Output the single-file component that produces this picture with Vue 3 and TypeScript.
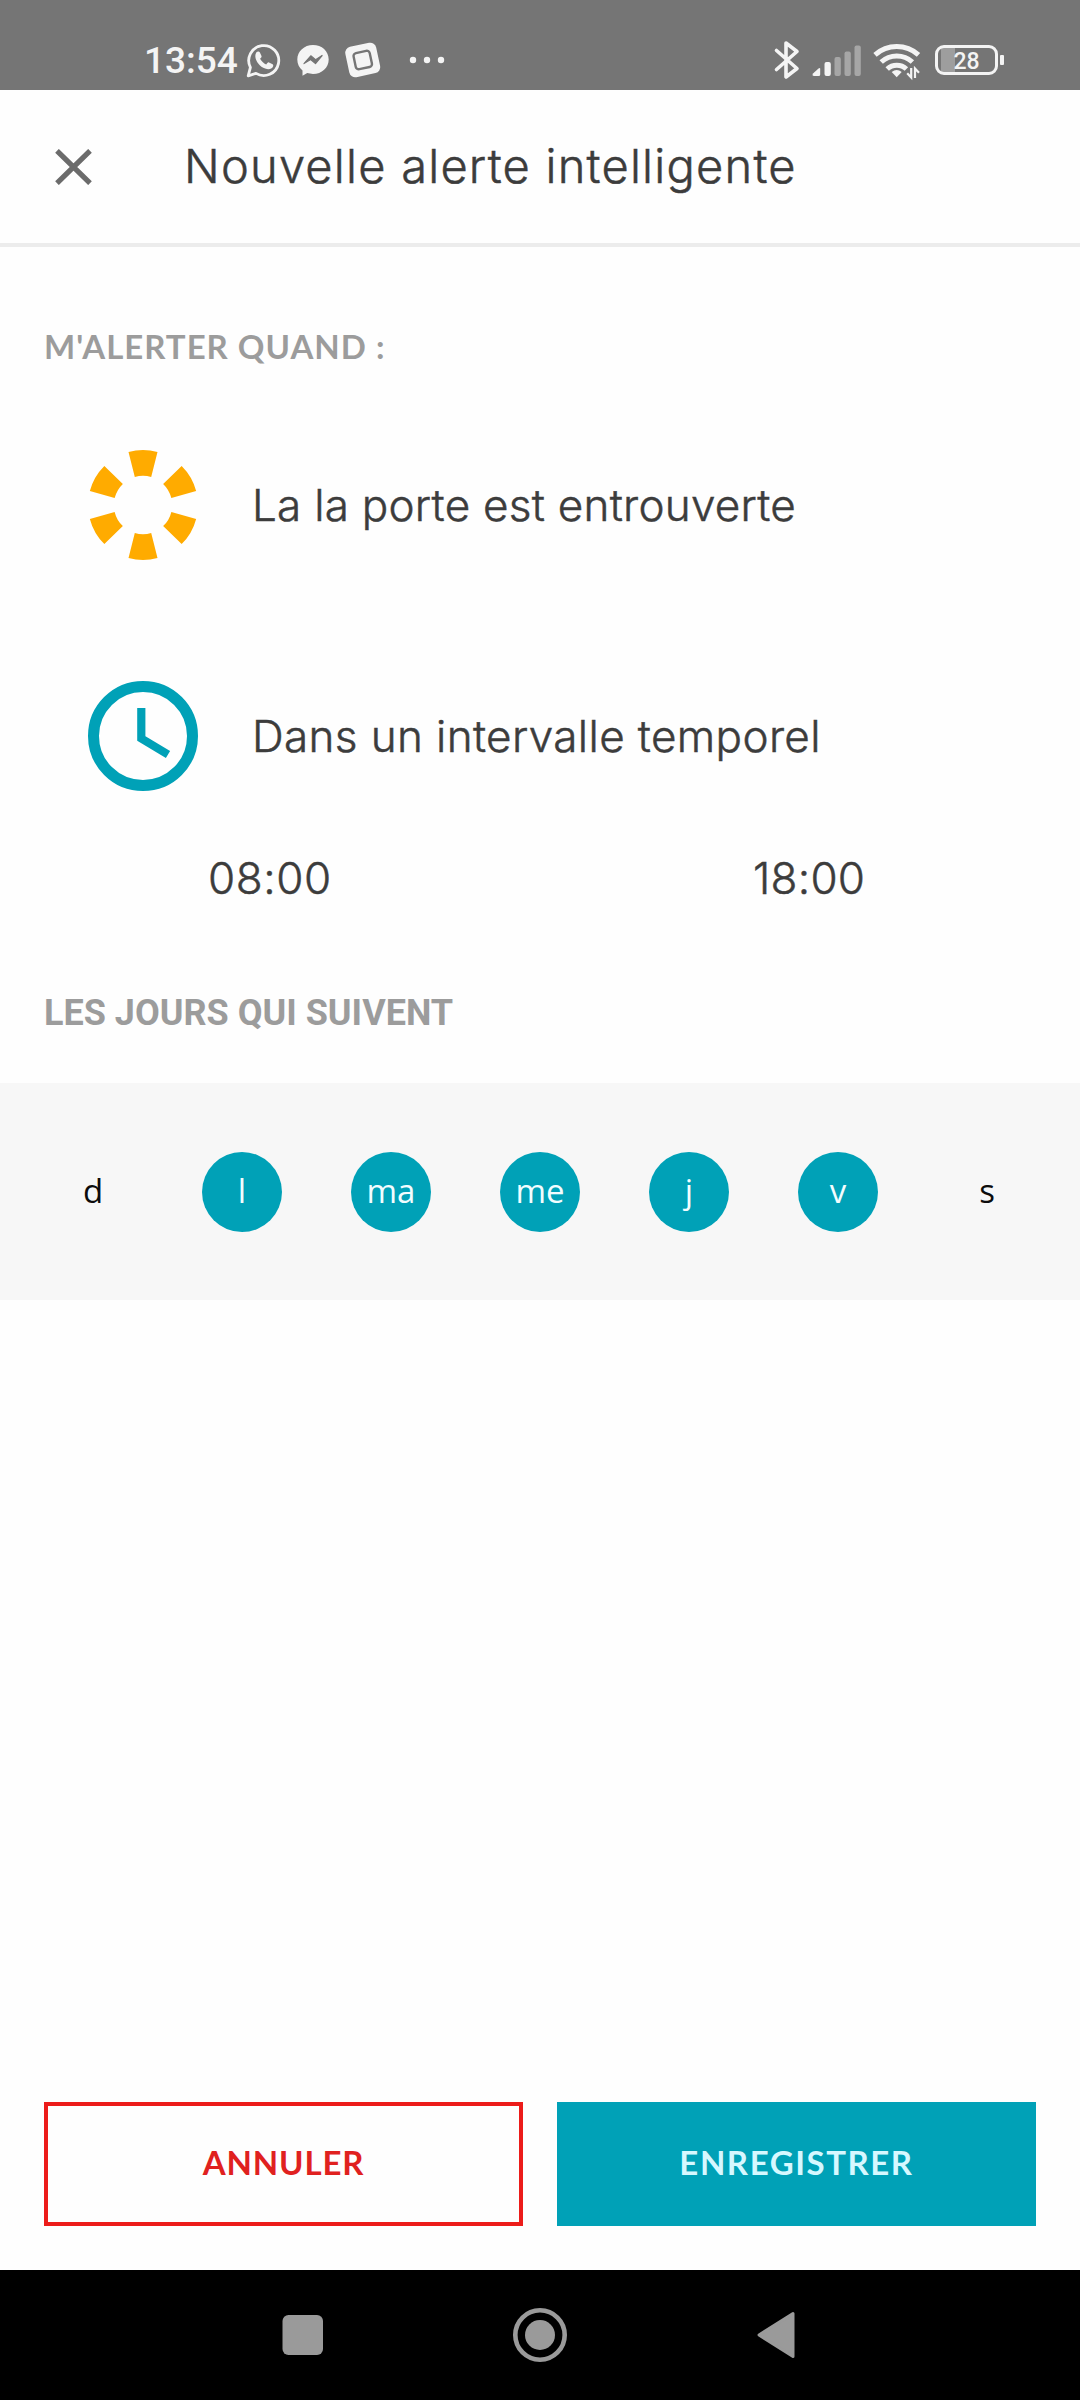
<script setup lang="ts">
import { ref } from 'vue'

interface Day {
  label: string
  active: boolean
}

const days = ref<Day[]>([
  { label: 'd', active: false },
  { label: 'l', active: true },
  { label: 'ma', active: true },
  { label: 'me', active: true },
  { label: 'j', active: true },
  { label: 'v', active: true },
  { label: 's', active: false },
])

const start = ref('08:00')
const end = ref('18:00')
const wedges = [0, 60, 120, 180, 240, 300]

function toggle(day: Day) {
  day.active = !day.active
}
</script>

<template>
  <div class="screen">
    <header class="status">
      <span class="clock">13:54</span>
      <svg class="status-left" width="240" height="50" viewBox="240 35 240 50">
        <!-- WhatsApp -->
        <path d="M248.2 75.8 L250.4 67.4 A15 15 0 1 1 256 73.4 Z" fill="none" stroke="#f4f4f4" stroke-width="2.8" stroke-linejoin="round" />
        <path d="M256.2 52.6c1.2-1.5 3-1.6 3.7-.2l1.6 3.6c.4 1-.8 2-1.4 2.8 1.4 2.6 3.4 4.5 6.1 5.6.9-.8 1.6-2.3 2.8-2l3.6 1.8c1.3.8.5 3-1 4-3.6 2.2-8.5.2-11.600-2.7-3-2.9-6.3-8.6-3.8-12.900z" fill="#f4f4f4" />
        <!-- Messenger -->
        <path d="M313 45c-8.8 0-15.700 6.3-15.700 14.600 0 4.600 2 8.3 5.200 10.900v5.300l4.700-2.700c1.800.5 3.800.8 5.800.8 8.800 0 15.700-6.200 15.700-14.500S321.800 45 313 45z" fill="#f4f4f4" />
        <path d="M304 63.600l6.800-7.800 4.800 4 6.500-4.300-6.600 8-4.900-4z" fill="#757575" stroke="#757575" stroke-width="1.2" stroke-linejoin="round" />
        <!-- Tilted square -->
        <g transform="rotate(-12 362.7 60)">
          <rect x="347" y="44.5" width="31.5" height="31" rx="6" fill="#f4f4f4" />
          <rect x="354.5" y="51.8" width="16.5" height="16.5" rx="3" fill="none" stroke="#757575" stroke-width="2.4" />
        </g>
        <g fill="#f4f4f4">
          <circle cx="413" cy="60" r="3.2" />
          <circle cx="427" cy="60" r="3.2" />
          <circle cx="441" cy="60" r="3.2" />
        </g>
      </svg>
      <svg class="status-right" width="165" height="50" viewBox="770 35 165 50">
        <!-- Bluetooth -->
        <path d="M776.5 50.5 L797 68.5 L786 77 V43 L797 51.5 L776.5 69.5" fill="none" stroke="#f4f4f4" stroke-width="3.6" stroke-linejoin="round" stroke-linecap="round" />
        <!-- Mobile signal -->
        <path d="M813 73.500l5.500-5q1.700-1.300 1.700.5v5.500q0 1.500-1.500 1.500h-4.500q-2.500 0-1.200-2.500z" fill="#f4f4f4" />
        <rect x="824.5" y="62" width="6.3" height="14" rx="2" fill="#f4f4f4" />
        <g fill="#a6a6a6">
          <rect x="834.5" y="57" width="6.3" height="19" rx="2" />
          <rect x="844.5" y="51.5" width="6.3" height="24.5" rx="2" />
          <rect x="854.5" y="45.5" width="6.3" height="30.5" rx="2" />
        </g>
        <!-- Wi-Fi -->
        <g fill="none" stroke="#f4f4f4" stroke-width="5">
          <path d="M875 54.800a32.500 32.500 0 0 1 43.500 0" />
          <path d="M881.200 62a23 23 0 0 1 31.200 0" />
          <path d="M887.200 69a14 14 0 0 1 19.200 0" />
        </g>
        <path d="M896.700 77.300l-5-5.300q5-4.200 10 0z" fill="#f4f4f4" />
        <path d="M911.200 68v9.500l-4-4.200M915 78v-9.500l4 4.200" fill="none" stroke="#f4f4f4" stroke-width="2.2" />
      </svg>
      <span class="battery">
        <span class="battery-body"><span class="battery-text">28</span></span>
        <span class="battery-tip"></span>
      </span>
    </header>

    <div class="bar">
      <button class="close" type="button" aria-label="Fermer">
        <svg width="37" height="36" viewBox="0 0 37 36">
          <path d="M2 1.800L35 34.200M35 1.800L2 34.200" stroke="#6b6b6b" stroke-width="5.2" />
        </svg>
      </button>
      <h1>Nouvelle alerte intelligente</h1>
    </div>

    <main>
      <h2 class="label-when">M'ALERTER QUAND :</h2>

      <div class="row">
        <svg class="icon" width="110" height="110" viewBox="-55 -55 110 110">
          <path
            v-for="a in wedges"
            :key="a"
            :transform="`rotate(${a})`"
            d="M-14.500 -53A55 55 0 0 1 14.500 -53L8.200 -28A29 29 0 0 0 -8.200 -28Z"
            fill="#ffab00"
          />
        </svg>
        <span class="text door">La la porte est entrouverte</span>
      </div>

      <div class="row second">
        <svg class="icon" width="110" height="110" viewBox="88 681 110 110">
          <circle cx="143" cy="736" r="49.5" fill="none" stroke="#00a1b7" stroke-width="11" />
          <path d="M141.300 708V738.500L168 754.500" fill="none" stroke="#00a1b7" stroke-width="8.2" />
        </svg>
        <span class="text interval">Dans un intervalle temporel</span>
      </div>

      <div class="times">
        <span class="time from">{{ start }}</span>
        <span class="time to">{{ end }}</span>
      </div>

      <h2 class="label-days">LES JOURS QUI SUIVENT</h2>

      <div class="days">
        <button
          v-for="day in days"
          :key="day.label"
          type="button"
          class="day"
          :class="{ active: day.active }"
          @click="toggle(day)"
        >
          {{ day.label }}
        </button>
      </div>
    </main>

    <footer class="actions">
      <button type="button" class="btn cancel">ANNULER</button>
      <button type="button" class="btn save">ENREGISTRER</button>
    </footer>

    <nav class="nav">
      <svg width="60" height="60" viewBox="-30 -30 60 60">
        <rect x="-20.5" y="-20" width="40.5" height="40" rx="6" fill="#9a9a9a" />
      </svg>
      <svg width="60" height="60" viewBox="-30 -30 60 60">
        <circle r="24.7" fill="none" stroke="#9a9a9a" stroke-width="4.6" />
        <circle r="15" fill="#9a9a9a" />
      </svg>
      <svg width="60" height="60" viewBox="-30 -30 60 60">
        <path d="M-18 0L16 -21.500V21.500Z" fill="#9a9a9a" stroke="#9a9a9a" stroke-width="3" stroke-linejoin="round" />
      </svg>
    </nav>
  </div>
</template>

<style>
body {
  background: #fefefe;
}
</style>

<style scoped>
.screen {
  box-sizing: border-box;
  width: 1080px;
  height: 2400px;
  display: flex;
  flex-direction: column;
  background: #fefefe;
  color: #3c3c3c;
  font-family: Lato, "Open Sans", sans-serif;
}
button {
  appearance: none;
  border: 0;
  margin: 0;
  padding: 0;
  background: none;
  font: inherit;
  color: inherit;
}
h1,
h2 {
  margin: 0;
}
svg {
  display: block;
  flex: none;
}
.status {
  flex: none;
  box-sizing: border-box;
  height: 90px;
  padding: 30px 76px 0 144px;
  display: flex;
  align-items: center;
  background: #757575;
}
.clock {
  width: 96px;
  padding-top: 2px;
  color: #f4f4f4;
  font: 500 37px/60px Roboto, sans-serif;
  white-space: nowrap;
}
.status-right {
  margin-left: auto;
}
.battery {
  display: flex;
  align-items: center;
  gap: 2px;
}
.battery-body {
  box-sizing: border-box;
  width: 63px;
  height: 30px;
  border: 3px solid #f4f4f4;
  border-radius: 9px;
  display: flex;
  justify-content: center;
  background: linear-gradient(90deg, transparent 3px, #9e9e9e 3px, #9e9e9e 17px, transparent 17px);
}
.battery-text {
  color: #f4f4f4;
  font: 500 23px/27px Roboto, sans-serif;
}
.battery-tip {
  width: 4px;
  height: 10px;
  border-radius: 1px;
  background: #f4f4f4;
}
.bar {
  flex: none;
  box-sizing: border-box;
  height: 157px;
  padding: 0 55px;
  display: flex;
  align-items: center;
  border-bottom: 4px solid #ececec;
}
.close {
  width: 129px;
}
h1,
.text,
.time {
  -webkit-text-stroke: 0.5px #3c3c3c;
}
h1 {
  font: 300 47px/60px Inter, sans-serif;
  letter-spacing: 1.23px;
  padding-bottom: 2px;
  white-space: nowrap;
}
main {
  flex: 1;
}
.label-when {
  padding: 69px 0 1px 44px;
  color: #9c9c9c;
  font-size: 33px;
  font-weight: 700;
  line-height: 60px;
  letter-spacing: 1px;
}
.row {
  display: flex;
  align-items: center;
  height: 110px;
  padding: 73px 0 0 88px;
}
.row.second {
  padding-top: 121px;
}
.text {
  margin-left: 54px;
  font: 300 44px/60px Inter, sans-serif;
  padding-bottom: 1px;
  white-space: nowrap;
}
.door {
  letter-spacing: 0.26px;
}
.interval {
  letter-spacing: 0.38px;
}
.times {
  display: flex;
  padding: 57px 0 0 208px;
}
.time {
  width: 545px;
  font: 300 44px/60px Inter, sans-serif;
  letter-spacing: 0.6px;
}
.to {
  width: auto;
  letter-spacing: 0.25px;
}
.label-days {
  padding: 75px 0 0 44px;
  height: 100px;
  color: #9c9c9c;
  font: 700 36px/60px Roboto, sans-serif;
}
.days {
  box-sizing: border-box;
  height: 217px;
  padding: 0 53px;
  display: flex;
  align-items: center;
  justify-content: space-between;
  background: #f7f7f7;
}
.day {
  box-sizing: border-box;
  width: 80px;
  height: 80px;
  border-radius: 50%;
  padding-bottom: 2px;
  color: #0c0c0c;
  font: 400 33px/78px "Open Sans", sans-serif;
  text-align: center;
}
.day.active {
  background: #00a1b7;
  color: #f2fdff;
}
.actions {
  flex: none;
  display: flex;
  gap: 34px;
  padding: 0 44px 44px;
}
.btn {
  box-sizing: border-box;
  flex: none;
  width: 479px;
  height: 124px;
  padding-bottom: 4px;
  font-size: 33px;
  font-weight: 700;
}
.cancel {
  border: 4px solid #ec1c1a;
  color: #e0211f;
  letter-spacing: 0.85px;
}
.save {
  background: #00a1b7;
  color: #d6f8ff;
  letter-spacing: 1.56px;
}
.nav {
  flex: none;
  height: 130px;
  display: flex;
  align-items: center;
  justify-content: center;
  gap: 177px;
  background: #000;
}
</style>
